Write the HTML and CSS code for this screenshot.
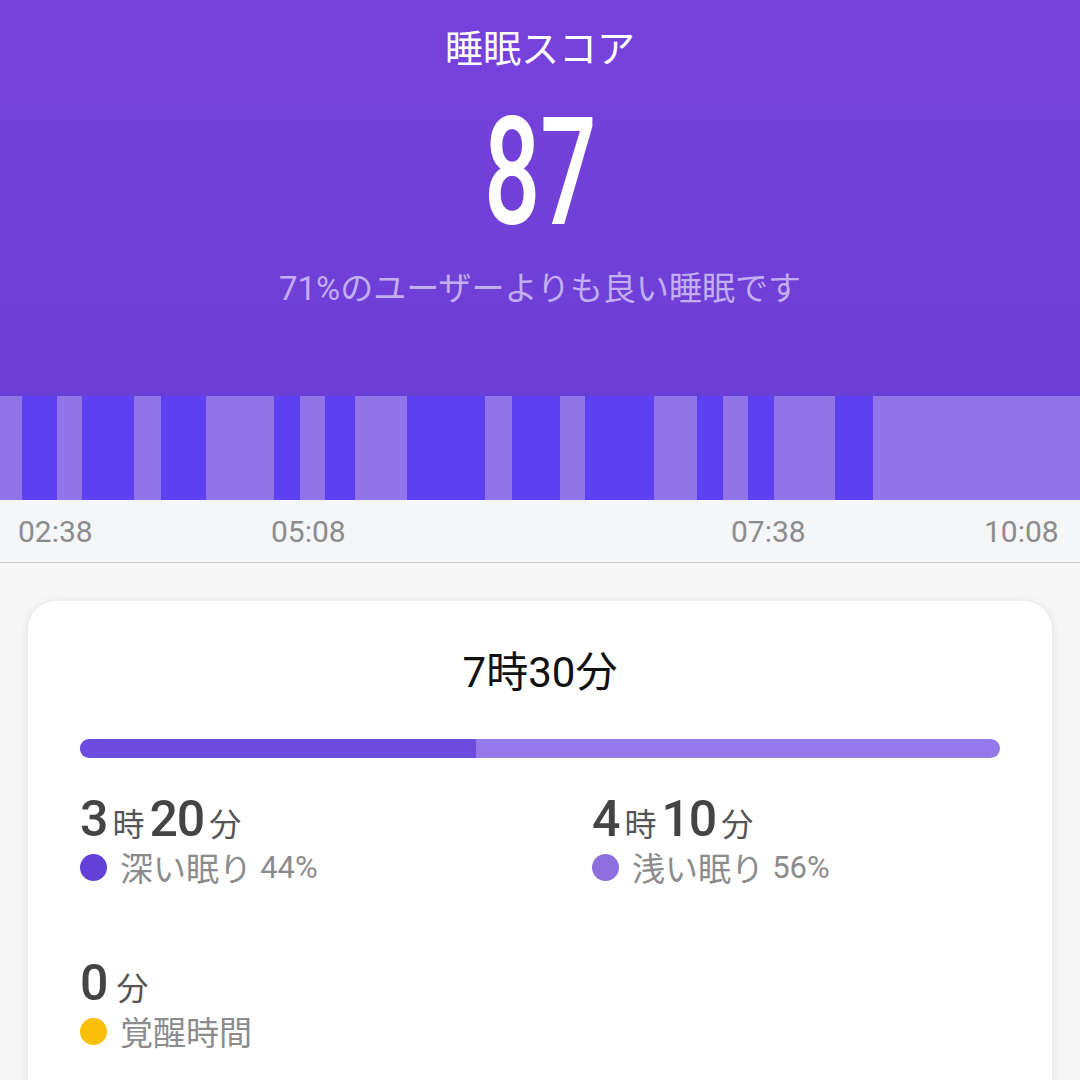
FILE: index.html
```html
<!DOCTYPE html>
<html lang="ja">
<head>
    <meta charset="UTF-8">
    <title>睡眠スコア</title>
    <link rel="stylesheet" href="styles.css">
</head>
<body>

<div class="header">
    <div class="title">睡眠スコア</div>
    <div class="score"><span>87</span></div>
    <div class="compare">71%のユーザーよりも良い睡眠です</div>
</div>

<!-- sleep stages, widths in px of 1080 -->
<div class="stages">
    <div class="light" style="width: 22px"></div>
    <div class="deep" style="width: 35px"></div>
    <div class="light" style="width: 25px"></div>
    <div class="deep" style="width: 52px"></div>
    <div class="light" style="width: 27px"></div>
    <div class="deep" style="width: 45px"></div>
    <div class="light" style="width: 68px"></div>
    <div class="deep" style="width: 26px"></div>
    <div class="light" style="width: 25px"></div>
    <div class="deep" style="width: 30px"></div>
    <div class="light" style="width: 52px"></div>
    <div class="deep" style="width: 78px"></div>
    <div class="light" style="width: 27px"></div>
    <div class="deep" style="width: 48px"></div>
    <div class="light" style="width: 25px"></div>
    <div class="deep" style="width: 69px"></div>
    <div class="light" style="width: 43px"></div>
    <div class="deep" style="width: 26px"></div>
    <div class="light" style="width: 25px"></div>
    <div class="deep" style="width: 26px"></div>
    <div class="light" style="width: 61px"></div>
    <div class="deep" style="width: 38px"></div>
    <div class="light rest"></div>
</div>

<div class="times">
    <span>02:38</span>
    <span>05:08</span>
    <span>07:38</span>
    <span>10:08</span>
</div>

<div class="card">
    <div class="total">7時30分</div>
    <div class="progress">
        <div class="progress-deep" style="width: 43%"></div>
    </div>
    <div class="stats">
        <div class="stat">
            <div class="amount"><b>3</b><i>時</i><b>20</b><i>分</i></div>
            <div class="label"><span class="dot dot-deep"></span>深い眠り <small>44%</small></div>
        </div>
        <div class="stat">
            <div class="amount"><b>4</b><i>時</i><b>10</b><i>分</i></div>
            <div class="label"><span class="dot dot-light"></span>浅い眠り <small>56%</small></div>
        </div>
        <div class="stat">
            <div class="amount"><b>0</b><i class="gap">分</i></div>
            <div class="label"><span class="dot dot-awake"></span>覚醒時間</div>
        </div>
    </div>
</div>

</body>
</html>
```

FILE: styles.css
```css
html {
    font-family: Roboto, "Noto Sans CJK JP", sans-serif;
}
body {
    margin: 0;
    background-color: #f7f7f7;
    overflow: hidden;
}
.header {
    height: 396px;
    box-sizing: border-box;
    padding-top: 24px;
    background: linear-gradient(#7842dc, #6b3fd6);
    color: white;
    text-align: center;
}
.title {
    font-size: 38px;
    line-height: 50px;
}
.score {
    margin-top: 24px;
    font-size: 150px;
    line-height: 150px;
    font-weight: 500;
}
.score span {
    display: inline-block;
    transform: scaleX(0.66);
}
.compare {
    margin-top: 18px;
    font-size: 33px;
    line-height: 46px;
    color: #c2aef0;
}
.stages {
    display: flex;
    height: 104px;
}
.stages .light {
    background-color: #9175e8;
}
.stages .deep {
    background-color: #5e40f3;
}
.stages .rest {
    flex: 1;
}
.times {
    display: grid;
    grid-template-columns: 253px 460px 253px auto;
    height: 62px;
    align-items: center;
    padding-left: 18px;
    background-color: #f5f6f8;
    border-bottom: 1px solid #cfcfcf;
    color: #8c8c8c;
    font-size: 30px;
}
.card {
    margin: 38px 28px 0;
    padding: 44px 52px 60px;
    background-color: white;
    border-radius: 28px;
    box-shadow: 0 2px 10px rgba(0, 0, 0, 0.12);
}
.total {
    text-align: center;
    font-size: 42px;
    line-height: 56px;
    color: #111;
}
.progress {
    margin-top: 38px;
    height: 19px;
    border-radius: 10px;
    background-color: #9379ea;
    overflow: hidden;
}
.progress-deep {
    height: 100%;
    background-color: #6a4cdf;
}
.stats {
    display: grid;
    grid-template-columns: 512px 1fr;
    row-gap: 68px;
    margin-top: 33px;
}
.amount {
    display: flex;
    align-items: baseline;
    gap: 5px;
    height: 56px;
    line-height: 56px;
}
.amount b {
    font-size: 50px;
    font-weight: 500;
    color: #444;
    letter-spacing: -1px;
}
.amount i {
    font-style: normal;
    font-size: 32px;
    color: #555;
}
.amount i.gap {
    margin-left: 4px;
}
.label {
    display: flex;
    align-items: center;
    height: 40px;
    font-size: 33px;
    color: #8c8c8c;
    white-space: pre;
}
.label small {
    font-size: 31px;
}
.dot {
    width: 27px;
    height: 27px;
    border-radius: 50%;
    margin-right: 13px;
}
.dot-deep {
    background-color: #6440d8;
}
.dot-light {
    background-color: #8f6fe0;
}
.dot-awake {
    background-color: #fbbf0a;
}
```
